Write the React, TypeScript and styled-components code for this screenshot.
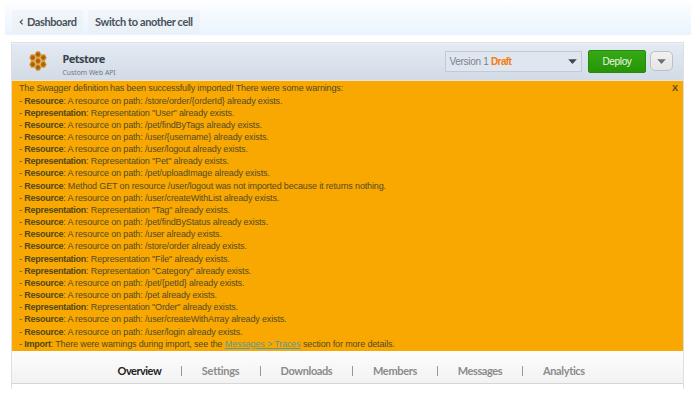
import React from "react";
import styled, { createGlobalStyle } from "styled-components";

const GlobalStyle = createGlobalStyle`
  * { box-sizing: border-box; }
  body { margin: 0; background: #fff; font-family: "Liberation Sans", sans-serif; }
  button { font: inherit; margin: 0; padding: 0; }
`;

const Page = styled.div`
  width: 698px;
  height: 402px;
  padding: 0 7px 0 5px;
  overflow: hidden;
`;

const TopBar = styled.nav`
  display: flex;
  gap: 5px;
  height: 35px;
  padding: 10px 7px 1px;
  background: linear-gradient(#fff, #f7fbff 30%, #eaf4fe);
`;

const TopLink = styled.button<{ $width: number; $spacing: number }>`
  display: flex;
  align-items: center;
  gap: 3px;
  width: ${(p) => p.$width}px;
  height: 24px;
  padding: 0 0 0 7px;
  border: 0;
  border-radius: 3px;
  background: linear-gradient(#f2f5f8, #e9f1f8);
  color: #48505a;
  font: 700 11px/24px Lato, sans-serif;
  letter-spacing: ${(p) => p.$spacing}px;
  text-align: left;
  white-space: nowrap;
`;

const Chevron = styled.svg`
  width: 5px;
  height: 6px;
`;

const Panel = styled.main`
  width: 673px;
  height: 347px;
  margin: 7px 0 0 6px;
  border: 1px solid #dedfe2;
  border-bottom: 0;
`;

const Header = styled.header`
  display: flex;
  height: 38px;
  padding-left: 17px;
  border-top: 1px solid #eef2f6;
  border-bottom: 1px solid #ebe5d5;
  background: linear-gradient(#e3eaf3, #d2dbe6);
`;

const Logo = styled.svg`
  width: 18px;
  height: 20px;
  margin-top: 7px;
`;

const Titles = styled.div`
  width: 397.5px;
  padding: 7px 0 0 15.5px;
`;

const Title = styled.h1`
  margin: 0;
  color: #3a424e;
  font: 700 11px/15px "Noto Sans", sans-serif;
  letter-spacing: -0.55px;
`;

const Subtitle = styled.div`
  color: #6e7680;
  font: 400 6.8px/13px "Noto Sans", sans-serif;
`;

const VersionSelect = styled.button`
  display: flex;
  align-items: center;
  width: 137px;
  height: 21px;
  margin: 7px 6.5px 0 0;
  padding: 0 4px;
  border: 1px solid #c3cad1;
  background: #dfe6ef;
  color: #7b838b;
  font-size: 10px;
  letter-spacing: -0.3px;
  white-space: pre;
`;

const Draft = styled.strong`
  color: #f57c0a;
  letter-spacing: -0.6px;
`;

const Arrow = styled.svg<{ $push?: boolean }>`
  width: 9px;
  height: 5px;
  margin-left: ${(p) => (p.$push ? "auto" : "0")};
`;

const DeployButton = styled.button`
  width: 58px;
  height: 23px;
  margin: 6px 4px 0 0;
  border: 1px solid #258a0b;
  border-radius: 2px;
  background: linear-gradient(#36a916, #279406);
  color: #edf8e9;
  font-size: 10px;
  letter-spacing: -0.35px;
`;

const MoreButton = styled.button`
  display: flex;
  align-items: center;
  justify-content: center;
  width: 23px;
  height: 20px;
  margin-top: 7px;
  border: 1px solid #bec1c4;
  border-radius: 5px;
  background: linear-gradient(#f1f1f1, #e5e5e5);
`;

const Notice = styled.section`
  display: flex;
  justify-content: space-between;
  height: 270px;
  padding: 1.4px 5px 0 7px;
  background: #f8a800;
  color: #544b2a;
  font-size: 9px;
  letter-spacing: -0.15px;
  line-height: 12.15px;
`;

const Line = styled.div`
  white-space: pre;
`;

const Label = styled.strong`
  color: #50471f;
  letter-spacing: -0.26px;
`;

const TraceLink = styled.a`
  color: #5b9a9c;
  text-decoration: underline;
`;

const Close = styled.button`
  align-self: flex-start;
  border: 0;
  background: none;
  color: #50471f;
  font-weight: 700;
  font-size: 9px;
  line-height: 12px;
`;

const Tabs = styled.nav`
  display: flex;
  align-items: center;
  height: 33px;
  padding: 7px 0 0 105.5px;
  border-bottom: 1px solid #d6d6d6;
  background: linear-gradient(#fdfdfd, #f2f2f2);
`;

const Tab = styled.a<{ $width: number; $active?: boolean; $spacing: number }>`
  width: ${(p) => p.$width}px;
  color: ${(p) => (p.$active ? "#222" : "#8b8b8b")};
  font: 700 11px/14px Lato, sans-serif;
  letter-spacing: ${(p) => p.$spacing}px;
  white-space: nowrap;
`;

const Divider = styled.span`
  width: 1px;
  height: 10px;
  margin: 0 20px 0 19.8px;
  background: #979797;
`;

const warnings: [string, string][] = [
  ["Resource", "A resource on path: /store/order/{orderId} already exists."],
  ["Representation", 'Representation "User" already exists.'],
  ["Resource", "A resource on path: /pet/findByTags already exists."],
  ["Resource", "A resource on path: /user/{username} already exists."],
  ["Resource", "A resource on path: /user/logout already exists."],
  ["Representation", 'Representation "Pet" already exists.'],
  ["Resource", "A resource on path: /pet/uploadImage already exists."],
  ["Resource", "Method GET on resource /user/logout was not imported because it returns nothing."],
  ["Resource", "A resource on path: /user/createWithList already exists."],
  ["Representation", 'Representation "Tag" already exists.'],
  ["Resource", "A resource on path: /pet/findByStatus already exists."],
  ["Resource", "A resource on path: /user already exists."],
  ["Resource", "A resource on path: /store/order already exists."],
  ["Representation", 'Representation "File" already exists.'],
  ["Representation", 'Representation "Category" already exists.'],
  ["Resource", "A resource on path: /pet/{petId} already exists."],
  ["Resource", "A resource on path: /pet already exists."],
  ["Representation", 'Representation "Order" already exists.'],
  ["Resource", "A resource on path: /user/createWithArray already exists."],
  ["Resource", "A resource on path: /user/login already exists."],
];

const tabs = [
  { name: "Overview", width: 43.5, spacing: -0.5 },
  { name: "Settings", width: 38, spacing: -0.25 },
  { name: "Downloads", width: 51.5, spacing: -0.4 },
  { name: "Members", width: 44, spacing: -0.3 },
  { name: "Messages", width: 44.5, spacing: -0.4 },
  { name: "Analytics", width: 42, spacing: -0.35 },
];

const cells = [[9, 3.5], [3.7, 6.6], [14.3, 6.6], [9, 10], [3.7, 13.4], [14.3, 13.4], [9, 16.5]];

function Honeycomb() {
  return (
    <Logo viewBox="0 0 18 20">
      {cells.map(([x, y]) => (
        <g key={`${x}-${y}`} transform={`translate(${x} ${y})`}>
          <path d="M-1.5-2.8h3L2.9 0 1.5 2.8h-3L-2.9 0Z" fill="#c47a12" stroke="#d8921f" strokeWidth="0.7" />
          <circle r="1.7" fill="#ab5c0a" />
        </g>
      ))}
    </Logo>
  );
}

function DownArrow({ push, color }: { push?: boolean; color: string }) {
  return (
    <Arrow $push={push} viewBox="0 0 9 5">
      <path d="M0.2 0.3h8.6L4.5 4.9Z" fill={color} />
    </Arrow>
  );
}

export default function App() {
  return (
    <>
      <GlobalStyle />
      <Page>
        <TopBar>
          <TopLink $width={71} $spacing={-0.4}>
            <Chevron viewBox="0 0 5 6">
              <path d="M3.7 0.6 1.2 3l2.5 2.4" fill="none" stroke="#48505a" strokeWidth="1.2" />
            </Chevron>
            <span>Dashboard</span>
          </TopLink>
          <TopLink $width={112} $spacing={-0.38}>Switch to another cell</TopLink>
        </TopBar>
        <Panel>
          <Header>
            <Honeycomb />
            <Titles>
              <Title>Petstore</Title>
              <Subtitle>Custom Web API</Subtitle>
            </Titles>
            <VersionSelect>
              <span>Version 1 <Draft>Draft</Draft></span>
              <DownArrow push color="#41464b" />
            </VersionSelect>
            <DeployButton>Deploy</DeployButton>
            <MoreButton><DownArrow color="#6e7174" /></MoreButton>
          </Header>
          <Notice>
            <div>
              <Line>The Swagger definition has been successfully imported! There were some warnings:</Line>
              {warnings.map(([label, text]) => (
                <Line key={label + text}>- <Label>{label}</Label>: {text}</Line>
              ))}
              <Line>
                - <Label>Import</Label>: There were warnings during import, see the{" "}
                <TraceLink>Messages &gt; Traces</TraceLink> section for more details.
              </Line>
            </div>
            <Close>X</Close>
          </Notice>
          <Tabs>
            {tabs.map((tab, i) => (
              <React.Fragment key={tab.name}>
                {i > 0 && <Divider />}
                <Tab $width={tab.width} $spacing={tab.spacing} $active={i === 0}>{tab.name}</Tab>
              </React.Fragment>
            ))}
          </Tabs>
        </Panel>
      </Page>
    </>
  );
}
